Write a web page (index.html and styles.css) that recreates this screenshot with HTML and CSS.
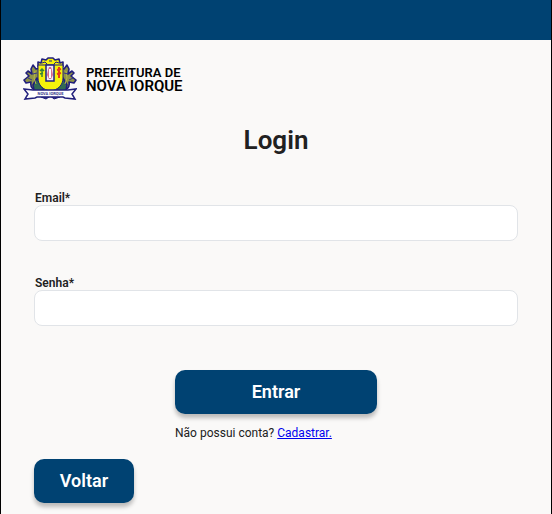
FILE: index.html
```html
<!DOCTYPE html>
<html lang="pt-BR">
<head>
<meta charset="utf-8">
<meta name="viewport" content="width=device-width, initial-scale=1">
<title>Login</title>
<link rel="stylesheet" href="styles.css">
</head>
<body>
<header class="topbar"></header>
<main class="page">
  <div class="brand">
    <svg class="crest" viewBox="0 0 54 46" aria-hidden="true">
      <g stroke="#211f7c" stroke-width="1.600" stroke-linejoin="round">
        <path fill="#8f9447" d="M16 34C10 35 7 31 8 26L3 27L1 24L6 20L3 17L5 15L9 18L8 13L10 9L13 13L17 12L18 18L16 25Z"/>
        <path fill="#8f9447" d="M38 34C44 35 47 31 46 26L51 27L53 24L48 20L51 17L49 15L45 18L46 13L44 9L41 13L37 12L36 18L38 25Z"/>
        <path fill="#316b53" d="M14 22L17 28L21 33L17 36L11 34L10 29Z"/>
        <path fill="#316b53" d="M40 22L37 28L33 33L37 36L43 34L44 29Z"/>
        <path fill="#f5f20c" d="M15 11V6L18 7L19 3L23 4L25 2H30L32 4L36 3L37 7L40 6V11Z"/>
        <path fill="#f5f20c" stroke-width="1" d="M15 9H40V22C40 29 35 34 27.500 35C20 34 15 29 15 22Z"/>
      </g>
      <path d="M19 7L22 6L24 8M26 5H29M31 8L33 6L36 7" fill="none" stroke="#211f7c"/>
      <path d="M12 15L11 22L13 28M43 15L44 22L42 28" fill="none" stroke="#b9b846"/>
      <path d="M5 22L9 24M50 22L46 24M10 18L14 17M45 18L41 17" fill="none" stroke="#34348a"/>
      <path fill="#eeeaf5" stroke="#211f7c" stroke-width="1.500" d="M23 9H31V25H23Z"/>
      <path fill="#d46b8c" d="M25 14L26 11H28L29 14L30 19L28 23H26L24 19Z"/>
      <path fill="#fff" d="M26 13H28V22H26Z"/>
      <path fill="none" stroke="#398236" stroke-width="1.500" d="M17 15L19 13L21 15M19 13V21M17 18L20 17"/>
      <path fill="none" stroke="#e43a20" stroke-width="2" d="M36 11V22M34 14L38 13M34 18L38 17"/>
      <path fill="#34348a" stroke="#211f7c" d="M16 34L23 39L28 36L33 39L39 34L37 41L31 43L27.500 40L23 43L18 41Z"/>
      <path fill="#fff" stroke="#211f7c" stroke-width="1.500" d="M1 33L10 34H45L53 33L49 38L52 43L42 42L40 41H14L12 42L2 43L5 38Z"/>
      <text x="27.500" y="39" text-anchor="middle" class="crest-name">NOVA IORQUE</text>
    </svg>
    <p class="brand-name"><span class="brand-top">PREFEITURA DE</span><span class="brand-city">NOVA IORQUE</span></p>
  </div>
  <form class="login">
    <h1 class="title">Login</h1>
    <div class="field">
      <label for="email">Email*</label>
      <input id="email" type="email" required>
    </div>
    <div class="field">
      <label for="senha">Senha*</label>
      <input id="senha" type="password" required>
    </div>
    <div class="submit">
      <button class="button" type="submit">Entrar</button>
      <p class="signup">Não possui conta? <a href="#cadastro">Cadastrar.</a></p>
    </div>
    <button class="button back" type="button">Voltar</button>
  </form>
</main>
</body>
</html>
```
FILE: styles.css
```css
* {
  box-sizing: border-box;
}

body {
  margin: 0;
  min-height: 100vh;
  border: solid #000;
  border-width: 0 1px;
  background: #faf9f8;
  color: #212121;
  font-family: Roboto, sans-serif;
  font-size: 12px;
  line-height: 14px;
}

p,
h1 {
  margin: 0;
}

.topbar {
  height: 40px;
  background: #004272;
}

.brand {
  display: flex;
  align-items: center;
  gap: 9px;
  padding: 16px 22px 0;
}

.crest {
  width: 54px;
  height: 46px;
}

.crest-name {
  fill: #34348a;
  font-size: 4px;
  font-weight: 700;
}

.brand-name {
  display: flex;
  flex-direction: column;
  padding-top: 2px;
  color: #000;
  font-weight: 600;
}

.brand-top {
  font-size: 13px;
  line-height: 12px;
}

.brand-city {
  font-size: 15px;
  line-height: 14px;
}

.login {
  display: flex;
  flex-direction: column;
  padding: 22px 33px 8px;
}

.title {
  margin-bottom: 35px;
  font-size: 26px;
  line-height: 32px;
  font-weight: 600;
  text-align: center;
}

.field {
  display: flex;
  flex-direction: column;
  margin-bottom: 35px;
}

.field label {
  padding-left: 1px;
  font-weight: 600;
}

.field input {
  width: 100%;
  height: 36px;
  padding: 0 12px;
  border: 1px solid #e1e4e8;
  border-radius: 8px;
  background: #fff;
  font: inherit;
}

.submit {
  display: flex;
  flex-direction: column;
  gap: 12px;
  width: 202px;
  margin: 9px auto 19px;
}

.button {
  height: 44px;
  padding: 0 25px;
  border: 0;
  border-radius: 10px;
  background: #004272;
  box-shadow: 0 4px 4px rgba(0, 0, 0, 0.25);
  color: #fff;
  font: 600 18px/22px Roboto, sans-serif;
}

.back {
  align-self: flex-start;
  min-width: 100px;
}

.signup a {
  color: #0000ee;
}
```
